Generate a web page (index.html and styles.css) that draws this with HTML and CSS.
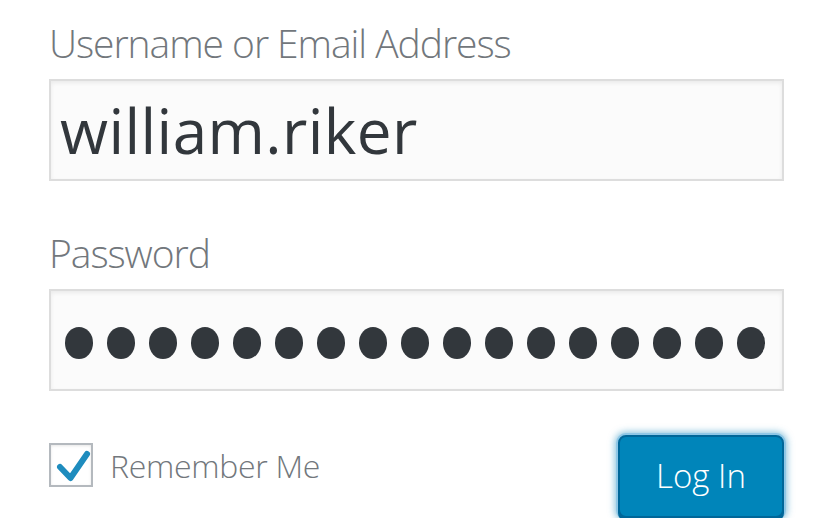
FILE: index.html
```html
<!DOCTYPE html>
<html>
<head>
<meta charset="utf-8">
<title>Log In</title>
<link rel="stylesheet" href="styles.css">
</head>
<body>
<form class="login">
  <label class="field-label">Username or Email Address</label>
  <div class="field field-text">william.riker</div>
  <label class="field-label field-label-pw">Password</label>
  <div class="field field-pw">
    <div class="dots">
      <span class="dot"></span><span class="dot"></span><span class="dot"></span><span class="dot"></span><span class="dot"></span><span class="dot"></span><span class="dot"></span><span class="dot"></span><span class="dot"></span><span class="dot"></span><span class="dot"></span><span class="dot"></span><span class="dot"></span><span class="dot"></span><span class="dot"></span><span class="dot"></span><span class="dot"></span>
    </div>
  </div>
  <div class="actions">
    <label class="remember">
      <span class="checkbox">
        <svg width="40" height="40" viewBox="0 0 40 40"><path d="M9 22 L19.5 33 L36 9" fill="none" stroke="#1e8cbe" stroke-width="6" stroke-linecap="round" stroke-linejoin="round"/></svg>
      </span>
      <span class="remember-text">Remember Me</span>
    </label>
    <button type="button" class="submit">Log In</button>
  </div>
</form>
</body>
</html>
```
FILE: styles.css
```css
html, body {
  margin: 0;
  background: #ffffff;
}
.login {
  width: 735px;
  padding: 23px 0 0 49px;
  font-family: "Open Sans", "Noto Sans", sans-serif;
  font-weight: 300;
}
.field-label {
  display: block;
  font-size: 39px;
  line-height: 40px;
  letter-spacing: -1.05px;
  color: #72777c;
  white-space: nowrap;
}
.field-label-pw {
  margin-top: 52px;
}
.field {
  box-sizing: border-box;
  margin-top: 16px;
  height: 102px;
  border: 2px solid #dddddd;
  background: #fbfbfb;
  box-shadow: inset 0 2px 4px rgba(0, 0, 0, 0.07);
}
.field-text {
  padding-left: 9px;
  font-size: 62px;
  font-weight: 400;
  line-height: 98px;
  letter-spacing: 0.4px;
  color: #32373c;
  white-space: nowrap;
  overflow: hidden;
}
.field-pw {
  padding: 6px 17px 0 7px;
  display: flex;
  align-items: center;
  overflow: hidden;
}
.dots {
  flex: 1;
  display: flex;
  justify-content: flex-end;
  gap: 13.5px;
  overflow: hidden;
}
.dot {
  flex-shrink: 0;
  width: 28.5px;
  height: 32px;
  border-radius: 50%;
  background: #32373c;
}
.actions {
  margin-top: 44px;
  display: flex;
  justify-content: space-between;
  align-items: flex-start;
}
.remember {
  display: flex;
  align-items: flex-start;
}
.checkbox {
  box-sizing: border-box;
  margin-top: 8px;
  width: 44px;
  height: 44px;
  border: 2px solid #b4b9be;
  background: #ffffff;
  box-shadow: inset 0 1px 3px rgba(0, 0, 0, 0.1);
  display: block;
}
.checkbox svg {
  display: block;
}
.remember-text {
  margin: 15px 0 0 17px;
  font-size: 32px;
  line-height: 32px;
  letter-spacing: -0.3px;
  color: #72777c;
  white-space: nowrap;
}
.submit {
  box-sizing: border-box;
  width: 166px;
  height: 83px;
  margin: 0;
  padding: 0 0 2px;
  border: 2px solid #006799;
  border-radius: 8px;
  background: #0085ba;
  color: #ffffff;
  font-family: "Open Sans", "Noto Sans", sans-serif;
  font-weight: 300;
  font-size: 33px;
  line-height: 40px;
  letter-spacing: 0;
  box-shadow: 0 3px 0 #006799, 0 0 0 2px #8fc7e6, 0 0 7px 3px rgba(30, 140, 190, 0.55);
}
```
